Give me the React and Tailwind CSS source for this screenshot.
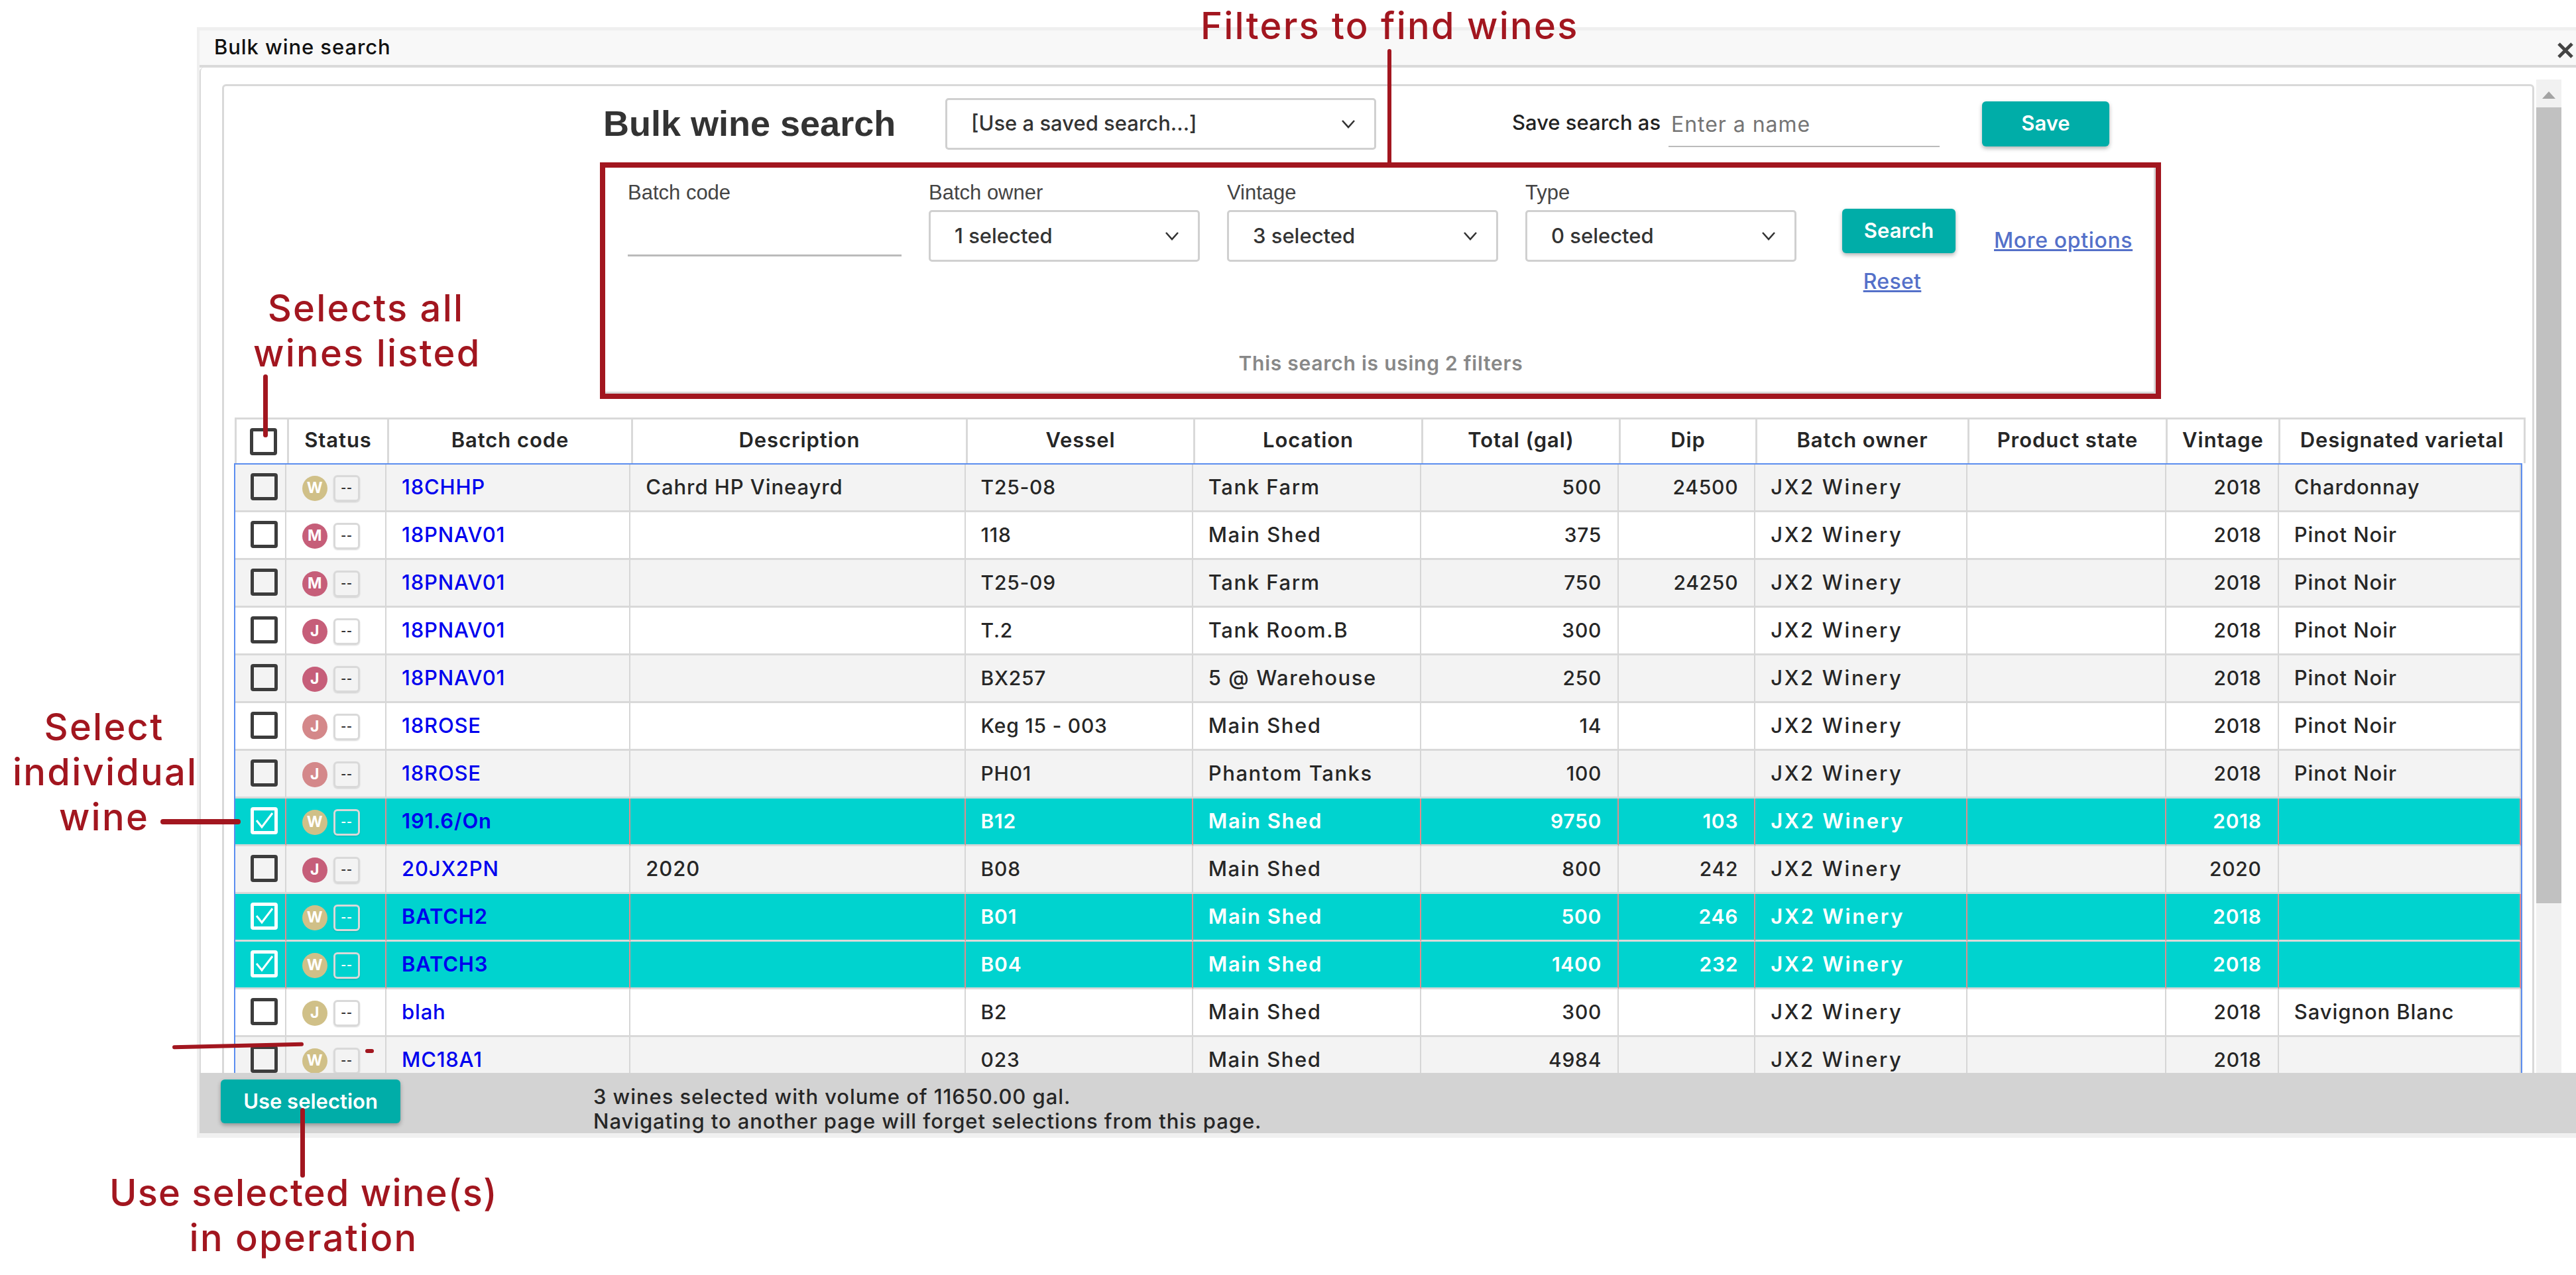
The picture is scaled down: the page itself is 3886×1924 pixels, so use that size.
const COLS = [79, 151, 368, 505, 343, 344, 298, 206, 320, 299, 170, 367];
const HEADS = ['', 'Status', 'Batch code', 'Description', 'Vessel', 'Location', 'Total (gal)', 'Dip', 'Batch owner', 'Product state', 'Vintage', 'Designated varietal'];
const GOLD = 'bg-[#d0c088]';
const PINK = 'bg-[#c65e79]';
const ROSE = 'bg-[#d4888a]';
const ROWS = [
  { l: 'W', c: GOLD, code: '18CHHP', desc: 'Cahrd HP Vineayrd', ves: 'T25-08', loc: 'Tank Farm', tot: '500', dip: '24500', vin: '2018', vr: 'Chardonnay' },
  { l: 'M', c: PINK, code: '18PNAV01', desc: '', ves: '118', loc: 'Main Shed', tot: '375', dip: '', vin: '2018', vr: 'Pinot Noir' },
  { l: 'M', c: PINK, code: '18PNAV01', desc: '', ves: 'T25-09', loc: 'Tank Farm', tot: '750', dip: '24250', vin: '2018', vr: 'Pinot Noir' },
  { l: 'J', c: PINK, code: '18PNAV01', desc: '', ves: 'T.2', loc: 'Tank Room.B', tot: '300', dip: '', vin: '2018', vr: 'Pinot Noir' },
  { l: 'J', c: PINK, code: '18PNAV01', desc: '', ves: 'BX257', loc: '5 @ Warehouse', tot: '250', dip: '', vin: '2018', vr: 'Pinot Noir' },
  { l: 'J', c: ROSE, code: '18ROSE', desc: '', ves: 'Keg 15 - 003', loc: 'Main Shed', tot: '14', dip: '', vin: '2018', vr: 'Pinot Noir' },
  { l: 'J', c: ROSE, code: '18ROSE', desc: '', ves: 'PH01', loc: 'Phantom Tanks', tot: '100', dip: '', vin: '2018', vr: 'Pinot Noir' },
  { l: 'W', c: GOLD, code: '191.6/On', desc: '', ves: 'B12', loc: 'Main Shed', tot: '9750', dip: '103', vin: '2018', vr: '', sel: true },
  { l: 'J', c: PINK, code: '20JX2PN', desc: '2020', ves: 'B08', loc: 'Main Shed', tot: '800', dip: '242', vin: '2020', vr: '' },
  { l: 'W', c: GOLD, code: 'BATCH2', desc: '', ves: 'B01', loc: 'Main Shed', tot: '500', dip: '246', vin: '2018', vr: '', sel: true },
  { l: 'W', c: GOLD, code: 'BATCH3', desc: '', ves: 'B04', loc: 'Main Shed', tot: '1400', dip: '232', vin: '2018', vr: '', sel: true },
  { l: 'J', c: GOLD, code: 'blah', desc: '', ves: 'B2', loc: 'Main Shed', tot: '300', dip: '', vin: '2018', vr: 'Savignon Blanc', white: true },
  { l: 'W', c: GOLD, code: 'MC18A1', desc: '', ves: '023', loc: 'Main Shed', tot: '4984', dip: '', vin: '2018', vr: '' },
];

function Chevron() {
  return (
    <svg width="22" height="14" viewBox="0 0 22 14" fill="none" className="shrink-0">
      <path d="M2 2 L11 12 L20 2" stroke="#333333" strokeWidth="2.6" />
    </svg>
  );
}

function Select({ text, w, h, pr }) {
  return (
    <div className={`flex items-center justify-between rounded-[5px] border-[3px] border-[#d0d0d0] bg-white pl-[36px] ${w} ${h} ${pr}`}>
      <span className="text-[31px] font-medium text-[#333333]">{text}</span>
      <Chevron />
    </div>
  );
}

function Check({ checked }) {
  if (checked) {
    return (
      <div className="ml-[23px] flex h-[41px] w-[41px] items-center justify-center rounded-[4px] border-[5px] border-white">
        <svg width="31" height="31" viewBox="0 0 31 31" fill="none">
          <path d="M4 15 L12 25 L28 4" stroke="white" strokeWidth="3" />
        </svg>
      </div>
    );
  }
  return <div className="ml-[23px] h-[41px] w-[41px] rounded-[4px] border-[5px] border-[#3c3c3c]" />;
}

function Row({ r, i }) {
  const odd = i % 2 === 0;
  const bg = r.sel ? 'bg-[#00d3cf]' : r.white || !odd ? 'bg-white' : 'bg-[#f3f3f3]';
  const text = r.sel ? 'text-white font-semibold' : 'text-[#262626] font-medium';
  const cell = `h-[72px] border-b-[3px] border-b-[#d9d9d9] border-r-2 ${r.sel ? 'border-r-[#e08c8c]' : 'border-r-[#d6d6d6]'} pl-[23px] pr-[22px] align-middle whitespace-nowrap overflow-hidden text-[30px] tracking-[0.025em]`;
  const wide = `${cell} !text-[31px] !tracking-[0.03em]`;
  const num = `${cell} text-right pr-[24px]`;
  return (
    <tr className={`${bg} ${text}`}>
      <td className={`${cell} !pl-0 !pr-0 !align-top pt-[13px]`}>
        <Check checked={r.sel} />
      </td>
      <td className={`${cell} !pl-0 !pr-0`}>
        <div className="ml-[24px] flex items-center gap-[9px] pt-[2px]">
          <span className={`flex h-[38px] w-[38px] items-center justify-center rounded-full text-[23px] font-bold text-white ${r.c}`}>{r.l}</span>
          <span className={`flex h-[40px] w-[40px] items-center justify-center rounded-[6px] border-[3px] text-[17px] font-bold shadow-[0_1px_2px_rgba(0,0,0,0.15)] border-[#d9d9d9] ${r.sel ? 'text-white' : 'text-[#333333]'}`}>--</span>
        </div>
      </td>
      <td className={`${wide} text-[#0000ee] !tracking-[0.025em]`}>{r.code}</td>
      <td className={wide}>{r.desc}</td>
      <td className={cell}>{r.ves}</td>
      <td className={`${wide} !tracking-[0.05em]`}>{r.loc}</td>
      <td className={num}>{r.tot}</td>
      <td className={num}>{r.dip}</td>
      <td className={`${wide} !tracking-[0.085em]`}>JX2 Winery</td>
      <td className={cell}></td>
      <td className={num}>{r.vin}</td>
      <td className={`${wide} border-r-0`}>{r.vr}</td>
    </tr>
  );
}

function Primary({ children, w, h }) {
  return (
    <div className={`flex items-center justify-center rounded-[6px] bg-[#00ada8] font-semibold text-white text-[31px] shadow-[0_3px_6px_rgba(0,0,0,0.3)] ${w} ${h}`}>
      {children}
    </div>
  );
}

function Note({ className, children }) {
  return <div className={`absolute whitespace-nowrap text-center font-medium text-[#a2161f] text-[56px] leading-[68px] tracking-[0.04em] ${className}`}>{children}</div>;
}

export default function App() {
  const arial = "font-['Liberation_Sans',Arial,sans-serif]";
  return (
    <div className="relative h-[1924px] w-[3886px] overflow-hidden bg-white pl-[297px] pt-[41px] font-['Inter',sans-serif]">
      <div className="flex h-[1676px] w-[3589px] flex-col border-l-[4px] border-t-[5px] border-[#efefef]">
        <div className="flex h-[56px] shrink-0 items-center justify-between border-b-[4px] border-[#dadada] bg-[#f8f8f8] pl-[22px] pr-[4px]">
          <span className="text-[31px] font-medium tracking-[0.03em] text-[#111111] -mt-[2px]">Bulk wine search</span>
          <svg width="24" height="24" viewBox="0 0 24 24" fill="none" className="mt-[8px]">
            <path d="M2 2 L22 22 M22 2 L2 22" stroke="#444444" strokeWidth="5" />
          </svg>
        </div>

        <div className="flex min-h-0 flex-1 overflow-hidden rounded-tl-[6px] border-l-2 border-[#d9d9d9] pl-[32px]">
          <div className="mt-[25px] h-[1600px] w-[3488px] shrink-0 rounded-t-[6px] border-[3px] border-[#d9d9d9] bg-white">
            <div className="ml-[572px] flex items-center pt-[16px]">
              <h1 className={`w-[516px] shrink-0 text-[54px] font-bold text-[#333333] ${arial}`}>Bulk wine search</h1>
              <Select text="[Use a saved search...]" w="w-[650px]" h="h-[78px]" pr="pr-[28px]" />
              <span className="ml-[205px] w-[236px] shrink-0 whitespace-nowrap text-[31px] font-medium text-[#222222] -mt-[2px]">Save search as</span>
              <div className="flex h-[70px] w-[409px] items-center border-b-[2.5px] border-[#bbbbbb] pl-[4px] pt-[4px] text-[32px] tracking-[0.03em] text-[#757575]">Enter a name</div>
              <div className="ml-[64px]"><Primary w="w-[192px]" h="h-[68px]">Save</Primary></div>
            </div>

            <div className="ml-[567px] mt-[18px] h-[357px] w-[2355px] border-[8px] border-[#a2161f]">
              <div className="h-full border-b-[3px] border-r-[3px] border-[#d9d9d9] pl-[34px]">
                <div className="flex h-[195px]">
                  <div className="w-[413px] pt-[22px]">
                    <div className={`text-[31px] leading-[32px] text-[#444444] ${arial}`}>Batch code</div>
                    <div className="mt-[10px] h-[70px] border-b-[3px] border-[#bbbbbb]" />
                  </div>
                  {[['Batch owner', '1 selected'], ['Vintage', '3 selected'], ['Type', '0 selected']].map(([label, value]) => (
                    <div key={label} className="ml-[41px] w-[409px] pt-[22px]">
                      <div className={`text-[31px] leading-[32px] text-[#444444] ${arial}`}>{label}</div>
                      <div className="mt-[10px]"><Select text={value} w="w-[409px]" h="h-[78px]" pr="pr-[28px]" /></div>
                    </div>
                  ))}
                  <div className="ml-[69px] flex w-[171px] flex-col items-center pt-[62px]">
                    <Primary w="w-[171px]" h="h-[67px]">Search</Primary>
                    <a className="mr-[20px] mt-[27px] text-[32px] font-medium leading-[32px] tracking-[0.01em] text-[#5470c9] underline">Reset</a>
                  </div>
                  <a className="ml-[58px] whitespace-nowrap pt-[94px] text-[32px] font-medium leading-[32px] tracking-[0.02em] text-[#5470c9] underline">More options</a>
                </div>
                <div className="mt-[84px] pr-[30px] text-center text-[30px] font-semibold leading-[32px] tracking-[0.025em] text-[#888888]">This search is using 2 filters</div>
              </div>
            </div>

            <div className="ml-[16px] mt-[28px] w-[3450px]">
              <table className="table-fixed border-separate border-spacing-0 w-[3450px] border-l-[3px] border-t-[3px] border-r-[3px] border-[#d9d9d9]">
                <colgroup>{COLS.map((c, i) => <col key={i} style={{ width: c }} />)}</colgroup>
                <thead>
                  <tr>
                    {HEADS.map((h, i) => (
                      <th key={i} className="h-[66px] border-r-[3px] border-[#d9d9d9] pb-[4px] text-center text-[31px] font-semibold tracking-[0.03em] text-[#262626] whitespace-nowrap last:border-r-0">
                        {i === 0 ? <div className="ml-[20px] mt-[4px] h-[41px] w-[41px] rounded-[4px] border-[5px] border-[#3c3c3c]" /> : h}
                      </th>
                    ))}
                  </tr>
                </thead>
              </table>
              <div className="-ml-[1px] w-[3452px] border-2 border-[#5b8def]">
                <table className="table-fixed border-separate border-spacing-0 w-full">
                  <colgroup>{COLS.map((c, i) => <col key={i} style={{ width: i === 0 ? c - 2 : i === 11 ? c - 2 : c }} />)}</colgroup>
                  <tbody>{ROWS.map((r, i) => <Row key={i} r={r} i={i} />)}</tbody>
                </table>
              </div>
            </div>
          </div>

          <div className="ml-[3px] mt-[18px] flex w-[38px] shrink-0 flex-col bg-[#f1f1f1]">
            <div className="flex h-[42px] items-center justify-center pt-[4px]">
              <div className="h-0 w-0 border-x-[10px] border-b-[11px] border-x-transparent border-b-[#a3a3a3]" />
            </div>
            <div className="h-[1201px] bg-[#c1c1c1]" />
          </div>
        </div>

        <div className="flex h-[98px] shrink-0 items-start border-b-[7px] border-[#f0f0f0] bg-[#d3d3d3] pl-[32px] pt-[10px]">
          <Primary w="w-[271px]" h="h-[66px]">Use selection</Primary>
          <div className="ml-[291px] mt-[7px] text-[31px] font-medium leading-[37px] tracking-[0.03em] text-[#262626]">
            <div>3 wines selected with volume of 11650.00 gal.</div>
            <div>Navigating to another page will forget selections from this page.</div>
          </div>
        </div>
      </div>

      <Note className="left-[1811px] top-[5px]">Filters to find wines</Note>
      <div className="absolute left-[2093px] top-[74px] h-[179px] w-[6px] rounded-full bg-[#a2161f]" />

      <Note className="left-[382px] top-[431px] w-[340px]">Selects all<br />wines listed</Note>
      <div className="absolute left-[397px] top-[565px] h-[95px] w-[7px] rounded-full bg-[#a2161f]" />

      <Note className="left-[19px] top-[1063px] w-[276px]">Select<br />individual<br />wine</Note>
      <div className="absolute left-[242px] top-[1236px] h-[8px] w-[121px] rounded-full bg-[#a2161f]" />

      <div className="absolute left-[260px] top-[1575px] h-[6px] w-[198px] -rotate-[1.3deg] rounded-full bg-[#a2161f]" />
      <div className="absolute left-[551px] top-[1583px] h-[6px] w-[13px] rounded-full bg-[#a2161f]" />

      <Note className="left-[165px] top-[1766px] w-[586px]"><span className="tracking-[0.022em]">Use selected wine(s)</span><br />in operation</Note>
      <div className="absolute left-[453px] top-[1672px] h-[105px] w-[7px] rounded-full bg-[#a2161f]" />
    </div>
  );
}
